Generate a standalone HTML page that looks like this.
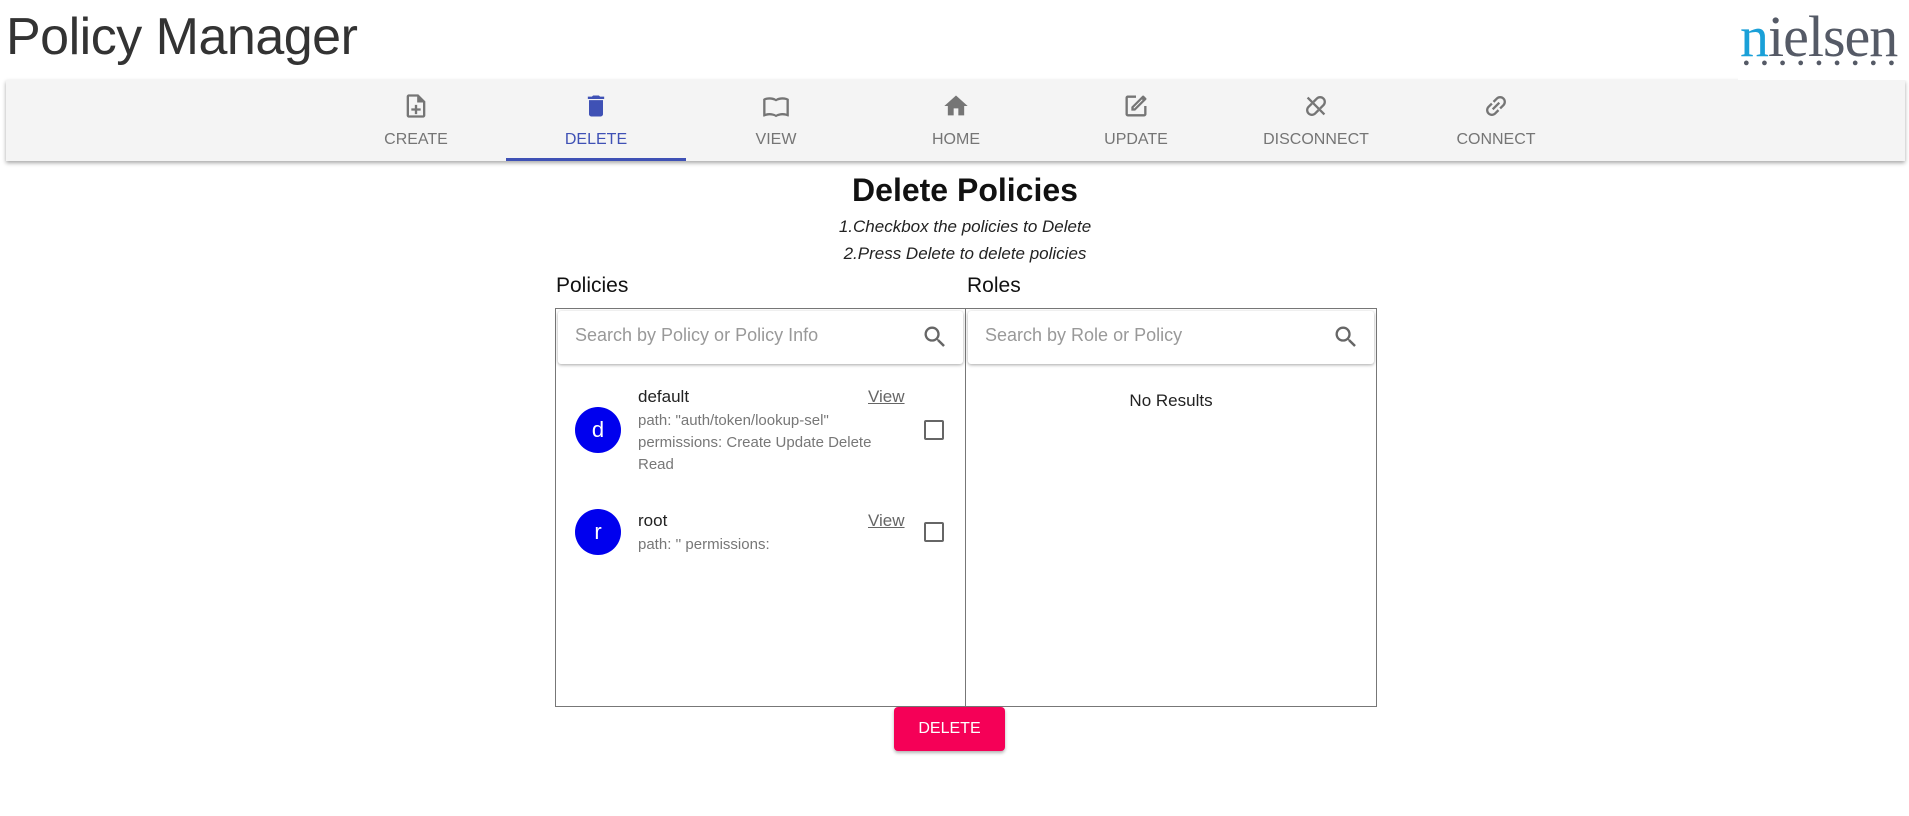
<!DOCTYPE html>
<html><head><meta charset="utf-8"><style>
*{box-sizing:border-box;margin:0;padding:0}
body{width:1909px;height:816px;background:#fff;font-family:"Liberation Sans",sans-serif;position:relative;overflow:hidden}
.abs{position:absolute}
#title{left:6px;top:7px;font-size:52px;font-weight:300;color:#333;letter-spacing:-0.5px}
#logo{left:1738px;top:0;width:171px;height:80px;background:#fff;z-index:3}
#nav{left:6px;top:80px;width:1899px;height:81px;background:#f4f4f4;box-shadow:0 2px 4px rgba(0,0,0,.35)}
.tab{position:absolute;top:0;width:180px;height:81px;text-align:center;color:#757575;font-size:16px}
.tab svg{position:absolute;left:76px;top:12px;width:28px;height:28px;fill:#757575}
.tab span{position:absolute;left:0;right:0;top:51px}
.tab.act{color:#3f51b5}.tab.act svg{fill:#3f51b5}
.tab.act:after{content:"";position:absolute;left:0;right:0;bottom:0;height:3px;background:#3f51b5}
h1{position:absolute;left:0;width:1930px;text-align:center;top:172px;font-size:32px;font-weight:bold;color:#111}
.ins{position:absolute;left:0;width:1930px;text-align:center;font-size:17px;font-style:italic;color:#222}
.lbl{position:absolute;top:274px;font-size:21px;color:#111}
.box{position:absolute;top:308px;height:399px;border:1px solid #777}
.search{position:absolute;left:2px;top:2px;right:2px;height:53px;box-shadow:0 1px 3px rgba(0,0,0,.35);background:#fff;font-size:18px;color:#999;padding:14px 0 0 17px;border-radius:3px}
.search svg{position:absolute;right:14px;top:12px;width:28px;height:28px;fill:#666}
.av{position:absolute;left:19px;width:46px;height:46px;border-radius:50%;background:#0000ee;color:#fff;font-size:22px;text-align:center;line-height:46px}
.nm{position:absolute;left:82px;font-size:17px;color:#222}
.sub{position:absolute;left:82px;font-size:15px;color:#777;line-height:22px}
.vw{position:absolute;left:312px;font-size:17px;color:#666;text-decoration:underline}
.cb{position:absolute;left:368px;width:20px;height:20px;border:2px solid #666;border-radius:2px}
#btn{left:894px;top:707px;width:111px;height:44px;background:#f50057;color:#fff;font-size:16px;text-align:center;line-height:44px;border-radius:4px;box-shadow:0 2px 3px rgba(0,0,0,.3)}
</style></head><body>
<div id="title" class="abs">Policy Manager</div>
<div id="logo" class="abs">
<div style="position:absolute;left:2px;top:3px;font-family:'Liberation Serif',serif;font-size:58px;color:#555a66;letter-spacing:-1px"><span style="color:#1aa0d8">n</span>ielsen</div>
<div style="position:absolute;left:5px;top:57px;font-size:11px;color:#555a66;letter-spacing:11.5px">●●●●●●●●●</div>
</div>
<div id="nav" class="abs">
<div class="tab" style="left:320px"><svg viewBox="0 0 24 24"><path d="M14 2H6c-1.1 0-2 .9-2 2v16c0 1.1.9 2 2 2h12c1.1 0 2-.9 2-2V8l-6-6zm4 18H6V4h7v5h5v11zm-7-9v3H8v2h3v3h2v-3h3v-2h-3v-3z"/></svg><span>CREATE</span></div>
<div class="tab act" style="left:500px"><svg viewBox="0 0 24 24"><path d="M6 19c0 1.1.9 2 2 2h8c1.1 0 2-.9 2-2V7H6v12zM19 4h-3.5l-1-1h-5l-1 1H5v2h14V4z"/></svg><span>DELETE</span></div>
<div class="tab" style="left:680px"><svg viewBox="0 0 24 24"><path d="M21 5c-1.1-.35-2.3-.5-3.5-.5-1.95 0-4.05.4-5.5 1.5-1.45-1.1-3.55-1.5-5.5-1.5S2.45 4.9 1 6v14.65c0 .25.25.5.5.5.1 0 .15-.05.25-.05C3.1 20.45 5.05 20 6.5 20c1.95 0 4.05.4 5.5 1.5 1.35-.85 3.8-1.5 5.5-1.5 1.65 0 3.35.3 4.75 1.05.1.05.15.05.25.05.25 0 .5-.25.5-.5V6c-.6-.45-1.25-.75-2-1zm0 13.5c-1.1-.35-2.3-.5-3.5-.5-1.7 0-4.15.65-5.5 1.5V8c1.35-.85 3.8-1.5 5.5-1.5 1.2 0 2.4.15 3.5.5v11.5zM3 18.5V7c1.1-.35 2.3-.5 3.5-.5 1.7 0 4.15.65 5.5 1.5v11.5C10.65 18.65 8.2 18 6.5 18c-1.2 0-2.4.15-3.5.5z"/></svg><span>VIEW</span></div>
<div class="tab" style="left:860px"><svg viewBox="0 0 24 24"><path d="M10 20v-6h4v6h5v-8h3L12 3 2 12h3v8z"/></svg><span>HOME</span></div>
<div class="tab" style="left:1040px"><svg viewBox="0 0 24 24"><path d="M5 21h14c1.1 0 2-.9 2-2v-7h-2v7H5V5h7V3H5c-1.1 0-2 .9-2 2v14c0 1.1.9 2 2 2zm3-5v-3.3l9.4-9.4c.4-.4 1-.4 1.4 0l1.9 1.9c.4.4.4 1 0 1.4L11.3 16H8zm2-2h.6l7.1-7.1-.6-.6L10 13.4V14z"/></svg><span>UPDATE</span></div>
<div class="tab" style="left:1220px"><svg viewBox="0 0 24 24"><g transform="rotate(-45 12 12)"><path d="M17 7h-4v2h4c1.65 0 3 1.35 3 3s-1.35 3-3 3h-4v2h4c2.76 0 5-2.24 5-5s-2.24-5-5-5zm-6 8H7c-1.65 0-3-1.35-3-3s1.35-3 3-3h4V7H7c-2.76 0-5 2.24-5 5s2.24 5 5 5h4v-2z"/></g><path d="M5.5 4.1 4.1 5.5 18.5 19.9 19.9 18.5z"/></svg><span>DISCONNECT</span></div>
<div class="tab" style="left:1400px"><svg viewBox="0 0 24 24"><path d="M17 7h-4v2h4c1.65 0 3 1.35 3 3s-1.35 3-3 3h-4v2h4c2.76 0 5-2.24 5-5s-2.24-5-5-5zm-6 8H7c-1.65 0-3-1.35-3-3s1.35-3 3-3h4V7H7c-2.76 0-5 2.24-5 5s2.24 5 5 5h4v-2zm-3-4h8v2H8z" transform="rotate(-45 12 12)"/></svg><span>CONNECT</span></div>
</div>
<h1>Delete Policies</h1>
<div class="ins" style="top:217px">1.Checkbox the policies to Delete</div>
<div class="ins" style="top:244px">2.Press Delete to delete policies</div>
<div class="lbl" style="left:556px">Policies</div>
<div class="lbl" style="left:967px">Roles</div>
<div class="box" style="left:555px;width:411px">
<div class="search">Search by Policy or Policy Info<svg viewBox="0 0 24 24"><path d="M15.5 14h-.79l-.28-.27A6.47 6.47 0 0 0 16 9.5 6.5 6.5 0 1 0 9.5 16c1.61 0 3.09-.59 4.23-1.57l.27.28v.79l5 4.99L20.49 19l-4.99-5zm-6 0C7.01 14 5 11.99 5 9.5S7.01 5 9.5 5 14 7.01 14 9.5 11.99 14 9.5 14z"/></svg></div>
<div class="av" style="top:98px">d</div>
<div class="nm" style="top:78px">default</div>
<div class="vw" style="top:78px">View</div>
<div class="sub" style="top:101px">path: "auth/token/lookup-sel"<br>permissions: Create Update Delete<br>Read</div>
<div class="cb" style="top:111px"></div>
<div class="av" style="top:200px">r</div>
<div class="nm" style="top:202px">root</div>
<div class="vw" style="top:202px">View</div>
<div class="sub" style="top:225px">path: '' permissions:</div>
<div class="cb" style="top:213px"></div>
</div>
<div class="box" style="left:965px;width:412px">
<div class="search">Search by Role or Policy<svg viewBox="0 0 24 24"><path d="M15.5 14h-.79l-.28-.27A6.47 6.47 0 0 0 16 9.5 6.5 6.5 0 1 0 9.5 16c1.61 0 3.09-.59 4.23-1.57l.27.28v.79l5 4.99L20.49 19l-4.99-5zm-6 0C7.01 14 5 11.99 5 9.5S7.01 5 9.5 5 14 7.01 14 9.5 11.99 14 9.5 14z"/></svg></div>
<div style="position:absolute;left:0;right:0;top:82px;text-align:center;font-size:17px;color:#222">No Results</div>
</div>
<div id="btn" class="abs">DELETE</div>
</body></html>
